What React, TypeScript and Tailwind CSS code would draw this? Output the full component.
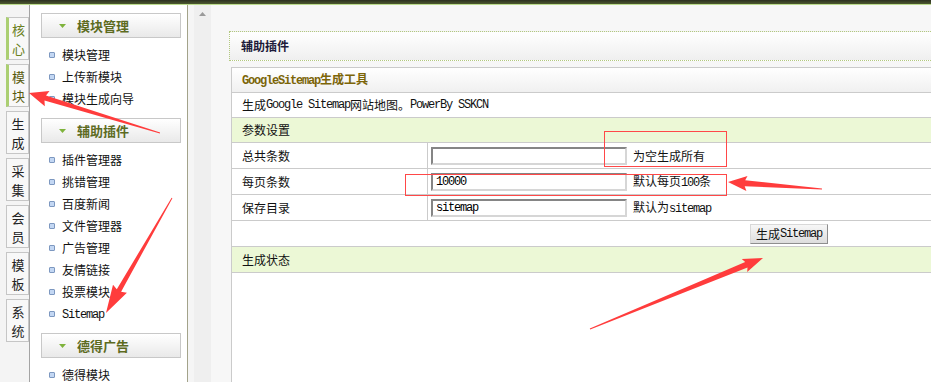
import React from "react";

const M = ({ children, className = "" }: { children: React.ReactNode; className?: string }) => (
  <span className={"font-['Liberation_Mono',monospace] text-[12px] tracking-[-1.2px] " + className}>{children}</span>
);

function arrowPts(
  tx: number,
  ty: number,
  px: number,
  py: number,
  tailW: number,
  shaftW: number,
  headLen: number,
  headHalf: number,
  barb = 2
) {
  const dx = px - tx;
  const dy = py - ty;
  const L = Math.hypot(dx, dy);
  const ux = dx / L;
  const uy = dy / L;
  const nx = -uy;
  const ny = ux;
  const bx = px - ux * headLen;
  const by = py - uy * headLen;
  const pts = [
    [tx + (nx * tailW) / 2, ty + (ny * tailW) / 2],
    [bx + (nx * shaftW) / 2, by + (ny * shaftW) / 2],
    [bx - ux * barb + nx * headHalf, by - uy * barb + ny * headHalf],
    [px, py],
    [bx - ux * barb - nx * headHalf, by - uy * barb - ny * headHalf],
    [bx - (nx * shaftW) / 2, by - (ny * shaftW) / 2],
    [tx - (nx * tailW) / 2, ty - (ny * tailW) / 2],
  ];
  return pts.map((p) => p[0].toFixed(1) + "," + p[1].toFixed(1)).join(" ");
}

const tabs: { t: [string, string]; active?: boolean; color?: string }[] = [
  { t: ["核", "心"], active: true, color: "text-[#6a8022]" },
  { t: ["模", "块"], active: true, color: "text-[#585a0e]" },
  { t: ["生", "成"] },
  { t: ["采", "集"] },
  { t: ["会", "员"] },
  { t: ["模", "板"] },
  { t: ["系", "统"] },
];

const Tri = () => (
  <svg width="7" height="4" viewBox="0 0 7 4" className="shrink-0">
    <polygon points="0,0 7,0 3.5,4" fill="#7fb33c" />
  </svg>
);

const SideHeader = ({ title, className = "" }: { title: string; className?: string }) => (
  <div
    className={
      "h-[25px] w-[140px] border border-[#c8c8c8] bg-linear-to-b from-white to-[#e9e9e9] flex items-center pl-[17px] " +
      className
    }
  >
    <Tri />
    <span className="ml-[11px] text-[13px] leading-[16px] font-bold text-[#5d6b1f]">{title}</span>
  </div>
);

const Item = ({ children }: { children: React.ReactNode }) => (
  <div className="h-[22px] flex items-center">
    <span className="ml-[8px] w-[6px] h-[6px] border border-[#7d98c0] bg-[#c3d7f3] rounded-[1px] shrink-0" />
    <span className="ml-[7px] text-[12px] leading-[16px] text-[#111]">{children}</span>
  </div>
);

const Input = ({ value }: { value?: string }) => (
  <div className="w-[196px] h-[18px] bg-white border-2 border-[#d6d6d6] border-t-[#858585] border-l-[#858585] flex items-center pl-[3px]">
    {value ? <M className="text-[#000]">{value}</M> : null}
  </div>
);

export default function App() {
  return (
    <div className="relative w-[931px] h-[382px] overflow-hidden bg-[#f7f7f7] font-['Noto_Sans_CJK_SC',sans-serif] text-[12px] text-[#111]">
      <div className="h-[4px] bg-linear-to-b from-[#2c3020] to-[#4d5a30]" />
      <div className="h-[1px] bg-[#bcdc8e]" />
      <div className="flex h-[377px]">
        {/* tabs column */}
        <div className="w-[30px] bg-[#f4f4f4] border-r border-[#a4a4a4] pt-[12px] pl-[6px] flex flex-col gap-[4px]">
          {tabs.map((tab, i) => (
            <div
              key={i}
              className={
                "h-[43px] w-[23px] flex flex-col items-center justify-center text-[13px] leading-[19px] bg-[#f8f8f8] border border-[#c6c6c6] " +
                (tab.active ? "border-l-[3px] border-l-[#abcf72] " + tab.color : "pl-[1px] text-[#222]")
              }
            >
              <span>{tab.t[0]}</span>
              <span>{tab.t[1]}</span>
            </div>
          ))}
        </div>

        {/* sidebar */}
        <div className="w-[158px] bg-white border-r border-[#a3a38a] pt-[8px] pl-[11px]">
          <SideHeader title="模块管理" />
          <div className="mt-[6px]">
            <Item>模块管理</Item>
            <Item>上传新模块</Item>
            <Item>模块生成向导</Item>
          </div>
          <SideHeader title="辅助插件" className="mt-[8px]" />
          <div className="mt-[6px]">
            <Item>插件管理器</Item>
            <Item>挑错管理</Item>
            <Item>百度新闻</Item>
            <Item>文件管理器</Item>
            <Item>广告管理</Item>
            <Item>友情链接</Item>
            <Item>投票模块</Item>
            <Item>
              <M>Sitemap</M>
            </Item>
          </div>
          <SideHeader title="德得广告" className="mt-[8px]" />
          <div className="mt-[6px]">
            <Item>德得模块</Item>
          </div>
        </div>

        {/* content */}
        <div className="flex-1 flex min-w-0">
          <div className="w-[6px] bg-[#f5f5f5]" />
          <div className="w-[17px] bg-[#efefef] flex justify-center pt-[7px]">
            <svg width="7" height="4" viewBox="0 0 7 4">
              <polygon points="3.5,0 7,4 0,4" fill="#9a9a9a" />
            </svg>
          </div>
          <div className="flex-1 min-w-0 overflow-hidden pl-[18px] pt-[26px]">
            <div className="w-[720px] h-[30px] border border-dotted border-[#b3c97f] bg-linear-to-b from-white to-[#efefef] flex items-center pl-[11px]">
              <span className="text-[12px] leading-[16px] font-bold text-[#1d1b3a]">辅助插件</span>
            </div>

            <div className="mt-[6px] ml-[2px] w-[720px] border-t border-l border-[#cbcbcb] flex flex-col">
              <div className="h-[25px] border-b border-[#cbcbcb] bg-linear-to-b from-white to-[#f0f0f0] flex items-center pl-[10px]">
                <span className="font-bold text-[#7c6508] leading-[16px]">
                  <M className="font-bold">GoogleSitemap</M>生成工具
                </span>
              </div>
              <div className="h-[25px] border-b border-[#cbcbcb] bg-white flex items-center pl-[10px] leading-[16px]">
                生成<M>Google Sitemap</M>网站地图。<M>PowerBy SSKCN</M>
              </div>
              <div className="h-[25px] border-b border-[#cbcbcb] bg-[#ecf8d6] flex items-center pl-[10px] leading-[16px]">
                参数设置
              </div>

              {[
                { label: "总共条数", value: "", hint: <>为空生成所有</> },
                { label: "每页条数", value: "10000", hint: <>默认每页<M>100</M>条</> },
                { label: "保存目录", value: "sitemap", hint: <>默认为<M>sitemap</M></> },
              ].map((r, i) => (
                <div key={i} className="h-[26px] border-b border-[#cbcbcb] bg-white flex">
                  <div className="w-[196px] border-r border-[#cbcbcb] flex items-center pl-[10px] leading-[16px]">
                    {r.label}
                  </div>
                  <div className="flex items-center pl-[3px]">
                    <Input value={r.value} />
                    <span className="ml-[6px] leading-[16px]">{r.hint}</span>
                  </div>
                </div>
              ))}

              <div className="h-[26px] border-b border-[#cbcbcb] bg-white flex items-center pl-[518px]">
                <div className="h-[20px] w-[78px] border border-[#d8d8d8] border-r-[#8e8e8e] border-b-[#8e8e8e] bg-linear-to-b from-[#f7f7f7] to-[#dddddd] flex items-center justify-center leading-[16px] text-[#111]">
                  生成<M>Sitemap</M>
                </div>
              </div>
              <div className="h-[26px] border-b border-[#cbcbcb] bg-[#ecf8d6] flex items-center pl-[10px] leading-[16px]">
                生成状态
              </div>
              <div className="h-[200px] bg-white" />
            </div>
          </div>
        </div>
      </div>

      {/* red annotations */}
      <svg className="absolute inset-0 pointer-events-none" width="931" height="382" viewBox="0 0 931 382">
        <rect x="604.5" y="131.5" width="122" height="35" fill="none" stroke="#ff4848" strokeWidth="1" />
        <rect x="405.5" y="174.5" width="321" height="21" fill="none" stroke="#ff4848" strokeWidth="1" />
        <polygon points={arrowPts(160, 133, 29, 93, 1, 5, 17, 8)} fill="#ff3c3c" />
        <polygon points={arrowPts(172, 198, 106, 313, 1, 5, 26, 8)} fill="#ff3c3c" />
        <polygon points={arrowPts(822, 189, 728, 182, 1, 6, 17, 7.5)} fill="#ff3c3c" />
        <polygon points={arrowPts(590, 329, 763, 258, 1, 6, 18, 7)} fill="#ff3c3c" />
      </svg>
    </div>
  );
}
